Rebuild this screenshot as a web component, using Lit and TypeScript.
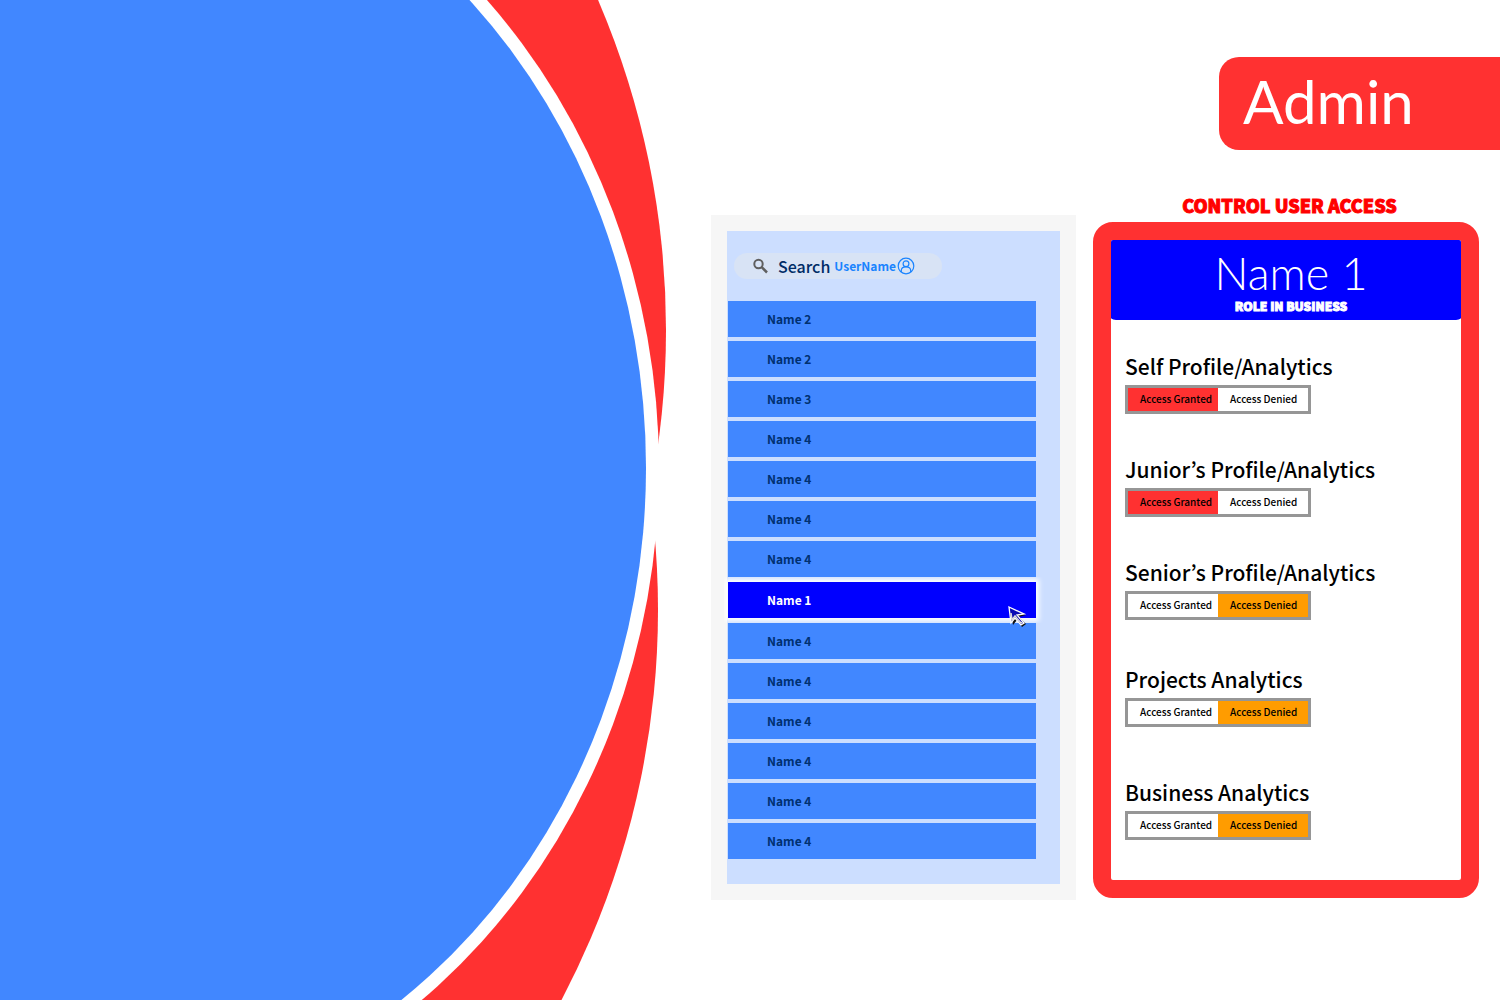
import { LitElement, html, css, svg } from "lit";
import { customElement, state } from "lit/decorators.js";
import { classMap } from "lit/directives/class-map.js";

interface AccessRule {
  label: string;
  granted: boolean;
}

const pointer = svg`
  <path d="M1 1 L17 8 L10 10 L17 17 L13 20 L8 13 L4 18 Z" fill="#111" transform="translate(1 1)"/>
  <path d="M1 1 L16 8 L9 9 L16 17 L13 19 L7 12 L3 17 Z" fill="#0a0ab4" stroke="#fff" stroke-width="1.3"/>
  <path d="M3 7 L4 14 L7 10 L13 17 L14.500 16.500" fill="none" stroke="#ddd" stroke-width="1.500"/>`;

@customElement("app-root")
export class AppRoot extends LitElement {
  static styles = css`
    :host {
      display: block;
      background: #fff;
      color: #000;
      font-family: "Noto Sans CJK JP", "Noto Sans CJK SC", "Open Sans", sans-serif;
    }
    * {
      box-sizing: border-box;
    }
    button,
    input {
      font: inherit;
      color: inherit;
      border: 0;
      padding: 0;
      margin: 0;
      background: none;
    }
    h1,
    h2,
    h3,
    p,
    ul {
      margin: 0;
      padding: 0;
    }
    .page {
      display: grid;
      grid-template-columns: minmax(0, 711fr) minmax(0, 365fr) minmax(0, 424fr);
      min-height: 100vh;
      overflow: hidden;
    }
    .art {
      width: 100%;
      height: 100%;
      display: block;
    }
    .users {
      padding-top: 215px;
    }
    .users-frame {
      border: 16px solid #f6f6f6;
      background: #ccdeff;
      padding: 22px 24px 25px 1px;
    }
    .search {
      display: flex;
      align-items: center;
      width: 208px;
      height: 26px;
      margin-left: 6px;
      padding-left: 18px;
      border-radius: 13px;
      background: #d8e3f5;
    }
    .search-icon {
      width: 18px;
      height: 18px;
      margin-right: 8px;
    }
    .search-label {
      font-size: 16px;
      line-height: 24px;
      font-weight: 500;
      color: #002c66;
      margin-right: 4px;
    }
    .search-input {
      width: 63px;
      font-size: 12px;
      line-height: 26px;
      font-weight: 700;
      color: #1a84ff;
      outline: none;
    }
    .search-input::placeholder {
      color: #1a84ff;
      opacity: 1;
    }
    .user-icon {
      width: 18px;
      height: 18px;
      flex: none;
    }
    .names {
      list-style: none;
      margin-top: 22px;
      display: grid;
      gap: 4px;
    }
    .name {
      position: relative;
    }
    .name-button {
      display: block;
      width: 100%;
      height: 36px;
      padding-left: 39px;
      text-align: left;
      font-size: 12px;
      line-height: 36px;
      font-weight: 700;
      color: #003070;
      background: #4187ff;
    }
    .name.selected {
      padding: 1px 0;
      z-index: 1;
    }
    .selected .name-button {
      background: #00f;
      color: #fff;
      box-shadow: 0 0 5px 3px #fff;
      clip-path: inset(-5px -8px -5px -4px);
    }
    .pointer {
      position: absolute;
      right: 8px;
      top: 25px;
      width: 20px;
      height: 22px;
    }
    .control {
      padding-top: 57px;
    }
    .tab {
      margin-left: auto;
      width: 281px;
      max-width: 100%;
      height: 93px;
      border-radius: 20px 0 0 20px;
      background: #ff3131;
      padding-left: 24px;
      color: #fff;
      font-family: Lato, "Open Sans", sans-serif;
      font-weight: 400;
      font-size: 60px;
      line-height: 88px;
    }
    .control-title {
      margin: 40px 14px 2px 0;
      padding-left: 17px;
      text-align: center;
      font-size: 18px;
      line-height: 30px;
      font-weight: 900;
      -webkit-text-stroke: 1px #f00;
      color: #f00;
      white-space: nowrap;
    }
    .panel {
      margin: 0 21px 0 17px;
      border: 18px solid #ff3131;
      border-radius: 20px;
      min-height: 676px;
      background: #fff;
    }
    .person {
      height: 80px;
      padding: 6px 0 0 10px;
      background: #00f;
      border-radius: 2px 2px 8px 8px / 2px 2px 2px 2px;
      color: #fff;
      text-align: center;
    }
    .person-name {
      font-family: Lato, "Open Sans", sans-serif;
      font-weight: 300;
      font-size: 45px;
      line-height: 54px;
    }
    .person-role {
      font-size: 12px;
      line-height: 12px;
      font-weight: 900;
      -webkit-text-stroke: 1px #fff;
    }
    .rules {
      display: grid;
      grid-template-rows: 103px 103px 107px 113px auto;
      padding: 29px 14px;
    }
    .rule-name {
      margin-bottom: 2px;
      font-size: 21px;
      line-height: 34px;
      font-weight: 500;
      white-space: nowrap;
    }
    .toggle {
      display: flex;
      width: 186px;
      height: 29px;
      border: 3px solid #969696;
    }
    .choice {
      flex: 1;
      padding: 0 0 1px 12px;
      text-align: left;
      font-size: 10px;
      line-height: 22px;
      font-weight: 500;
      white-space: nowrap;
    }
    .choice.granted {
      background: #ff3131;
    }
    .choice.denied {
      background: #ff9c00;
    }
  `;

  @state() private selected = 7;

  @state() private rules: AccessRule[] = [
    { label: "Self Profile/Analytics", granted: true },
    { label: "Junior’s Profile/Analytics", granted: true },
    { label: "Senior’s Profile/Analytics", granted: false },
    { label: "Projects Analytics", granted: false },
    { label: "Business Analytics", granted: false },
  ];

  private names = [2, 2, 3, 4, 4, 4, 4, 1, 4, 4, 4, 4, 4, 4].map((n) => `Name ${n}`);

  private setRule(index: number, granted: boolean) {
    this.rules = this.rules.map((r, i) => (i === index ? { ...r, granted } : r));
  }

  private renderName(name: string, index: number) {
    const selected = index === this.selected;
    return html`<li class=${classMap({ name: true, selected })}>
      <button class="name-button" @click=${() => (this.selected = index)}>${name}</button>
      ${selected
        ? html`<svg class="pointer" viewBox="0 0 20 22" aria-hidden="true">${pointer}</svg>`
        : null}
    </li>`;
  }

  private renderRule(rule: AccessRule, index: number) {
    return html`<section>
      <h3 class="rule-name" id="rule-${index}">${rule.label}</h3>
      <div class="toggle" role="group" aria-labelledby="rule-${index}">
        <button
          class=${classMap({ choice: true, granted: rule.granted })}
          aria-pressed=${rule.granted}
          @click=${() => this.setRule(index, true)}
        >Access Granted</button>
        <button
          class=${classMap({ choice: true, denied: !rule.granted })}
          aria-pressed=${!rule.granted}
          @click=${() => this.setRule(index, false)}
        >Access Denied</button>
      </div>
    </section>`;
  }

  render() {
    return html`<main class="page">
      <svg class="art" viewBox="0 0 711 1000" preserveAspectRatio="xMinYMid slice" aria-hidden="true">
        <ellipse cx="-217" cy="330" rx="883" ry="858" fill="#ff3131" />
        <ellipse cx="-225" cy="610" rx="883" ry="858" fill="#ff3131" />
        <ellipse cx="54" cy="468" rx="605" ry="670" fill="#fff" />
        <ellipse cx="54" cy="468" rx="592" ry="657" fill="#4187ff" />
      </svg>
      <section class="users">
        <div class="users-frame">
          <div class="search">
            <svg class="search-icon" viewBox="0 0 18 18" fill="none" stroke="#5f5f5f" aria-hidden="true">
              <circle cx="6.500" cy="7" r="4.200" stroke-width="2" />
              <path d="M9.700 10.200 L15 15.500" stroke-width="2.500" />
            </svg>
            <label class="search-label" for="search">Search</label>
            <input class="search-input" id="search" type="text" placeholder="UserName" />
            <svg class="user-icon" viewBox="0 0 18 18" fill="none" stroke="#1a84ff" aria-hidden="true">
              <circle cx="9" cy="9" r="7.800" stroke-width="1.200" />
              <circle cx="9" cy="6.700" r="2.900" stroke-width="1.200" />
              <path d="M4.300 15 V13.500 C4.300 11.200 6.200 9.800 9 9.800 C11.800 9.800 13.700 11.200 13.700 13.500 V15" stroke-width="1.200" />
            </svg>
          </div>
          <ul class="names">
            ${this.names.map((n, i) => this.renderName(n, i))}
          </ul>
        </div>
      </section>
      <section class="control">
        <h1 class="tab">Admin</h1>
        <h2 class="control-title">CONTROL USER ACCESS</h2>
        <div class="panel">
          <header class="person">
            <h2 class="person-name">${this.names[this.selected]}</h2>
            <p class="person-role">ROLE IN BUSINESS</p>
          </header>
          <div class="rules">${this.rules.map((r, i) => this.renderRule(r, i))}</div>
        </div>
      </section>
    </main>`;
  }
}
